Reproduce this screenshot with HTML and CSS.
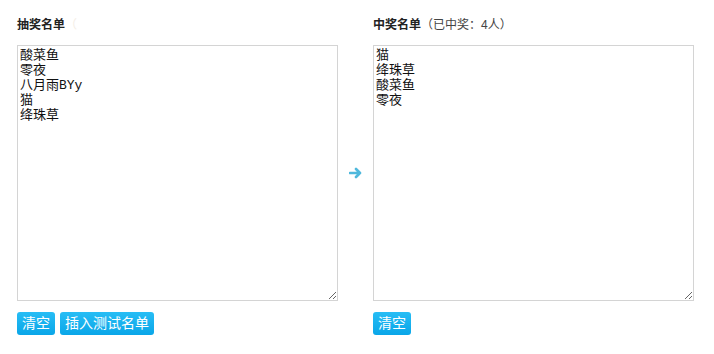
FILE: index.html
```html
<!DOCTYPE html>
<html lang="zh-CN">
<head>
    <meta charset="UTF-8">
    <title>抽奖</title>
    <link rel="stylesheet" href="styles.css">
</head>
<body>
    <div class="lottery">
        <div class="panel">
            <div class="panel-title">抽奖名单<span class="hint">（</span></div>
            <textarea class="names">酸菜鱼
零夜
八月雨BYy
猫
绛珠草</textarea>
            <div class="actions">
                <button class="btn">清空</button>
                <button class="btn">插入测试名单</button>
            </div>
        </div>

        <div class="arrow">
            <svg width="14" height="12" viewBox="0 0 14 12">
                <path d="M1 6 H11 M7 2 L11 6 L7 10" fill="none" stroke="#4fb8dc" stroke-width="2.6" stroke-linecap="round" stroke-linejoin="round"/>
            </svg>
        </div>

        <div class="panel">
            <div class="panel-title">中奖名单<span class="count">（已中奖：4人）</span></div>
            <textarea class="names">猫
绛珠草
酸菜鱼
零夜</textarea>
            <div class="actions">
                <button class="btn">清空</button>
            </div>
        </div>
    </div>
</body>
</html>
```

FILE: styles.css
```css
body {
    margin: 0;
    padding: 17px 17px 0;
    background: #fff;
    font-family: "Liberation Sans", "Noto Sans CJK SC", sans-serif;
    color: #222;
}

.lottery {
    display: flex;
    align-items: flex-start;
}

.panel {
    width: 321px;
}

.panel-title {
    font-size: 12px;
    font-weight: bold;
    line-height: 16px;
    height: 16px;
    margin-bottom: 12px;
}

.panel-title .hint {
    font-weight: normal;
    color: #f4eee6;
}

.panel-title .count {
    font-weight: normal;
    color: #444;
    font-size: 12px;
}

.names {
    display: block;
    box-sizing: border-box;
    width: 321px;
    height: 256px;
    margin: 0;
    padding: 2px;
    border: 1px solid #d4d4d4;
    font-family: "Liberation Mono", "Noto Sans CJK SC", monospace;
    font-size: 13px;
    line-height: 15px;
    color: #111;
    resize: both;
    outline: none;
}

.actions {
    display: flex;
    gap: 5px;
    margin-top: 11px;
}

.btn {
    height: 23px;
    padding: 0 5px;
    border: none;
    border-radius: 3px;
    background: linear-gradient(#27bdf5, #0aa6e8);
    color: #fff;
    font-family: "Liberation Sans", "Noto Sans CJK SC", sans-serif;
    font-size: 14px;
    line-height: 23px;
    cursor: pointer;
}

.arrow {
    width: 35px;
    height: 256px;
    margin-top: 28px;
    display: flex;
    align-items: center;
    justify-content: center;
}
```
